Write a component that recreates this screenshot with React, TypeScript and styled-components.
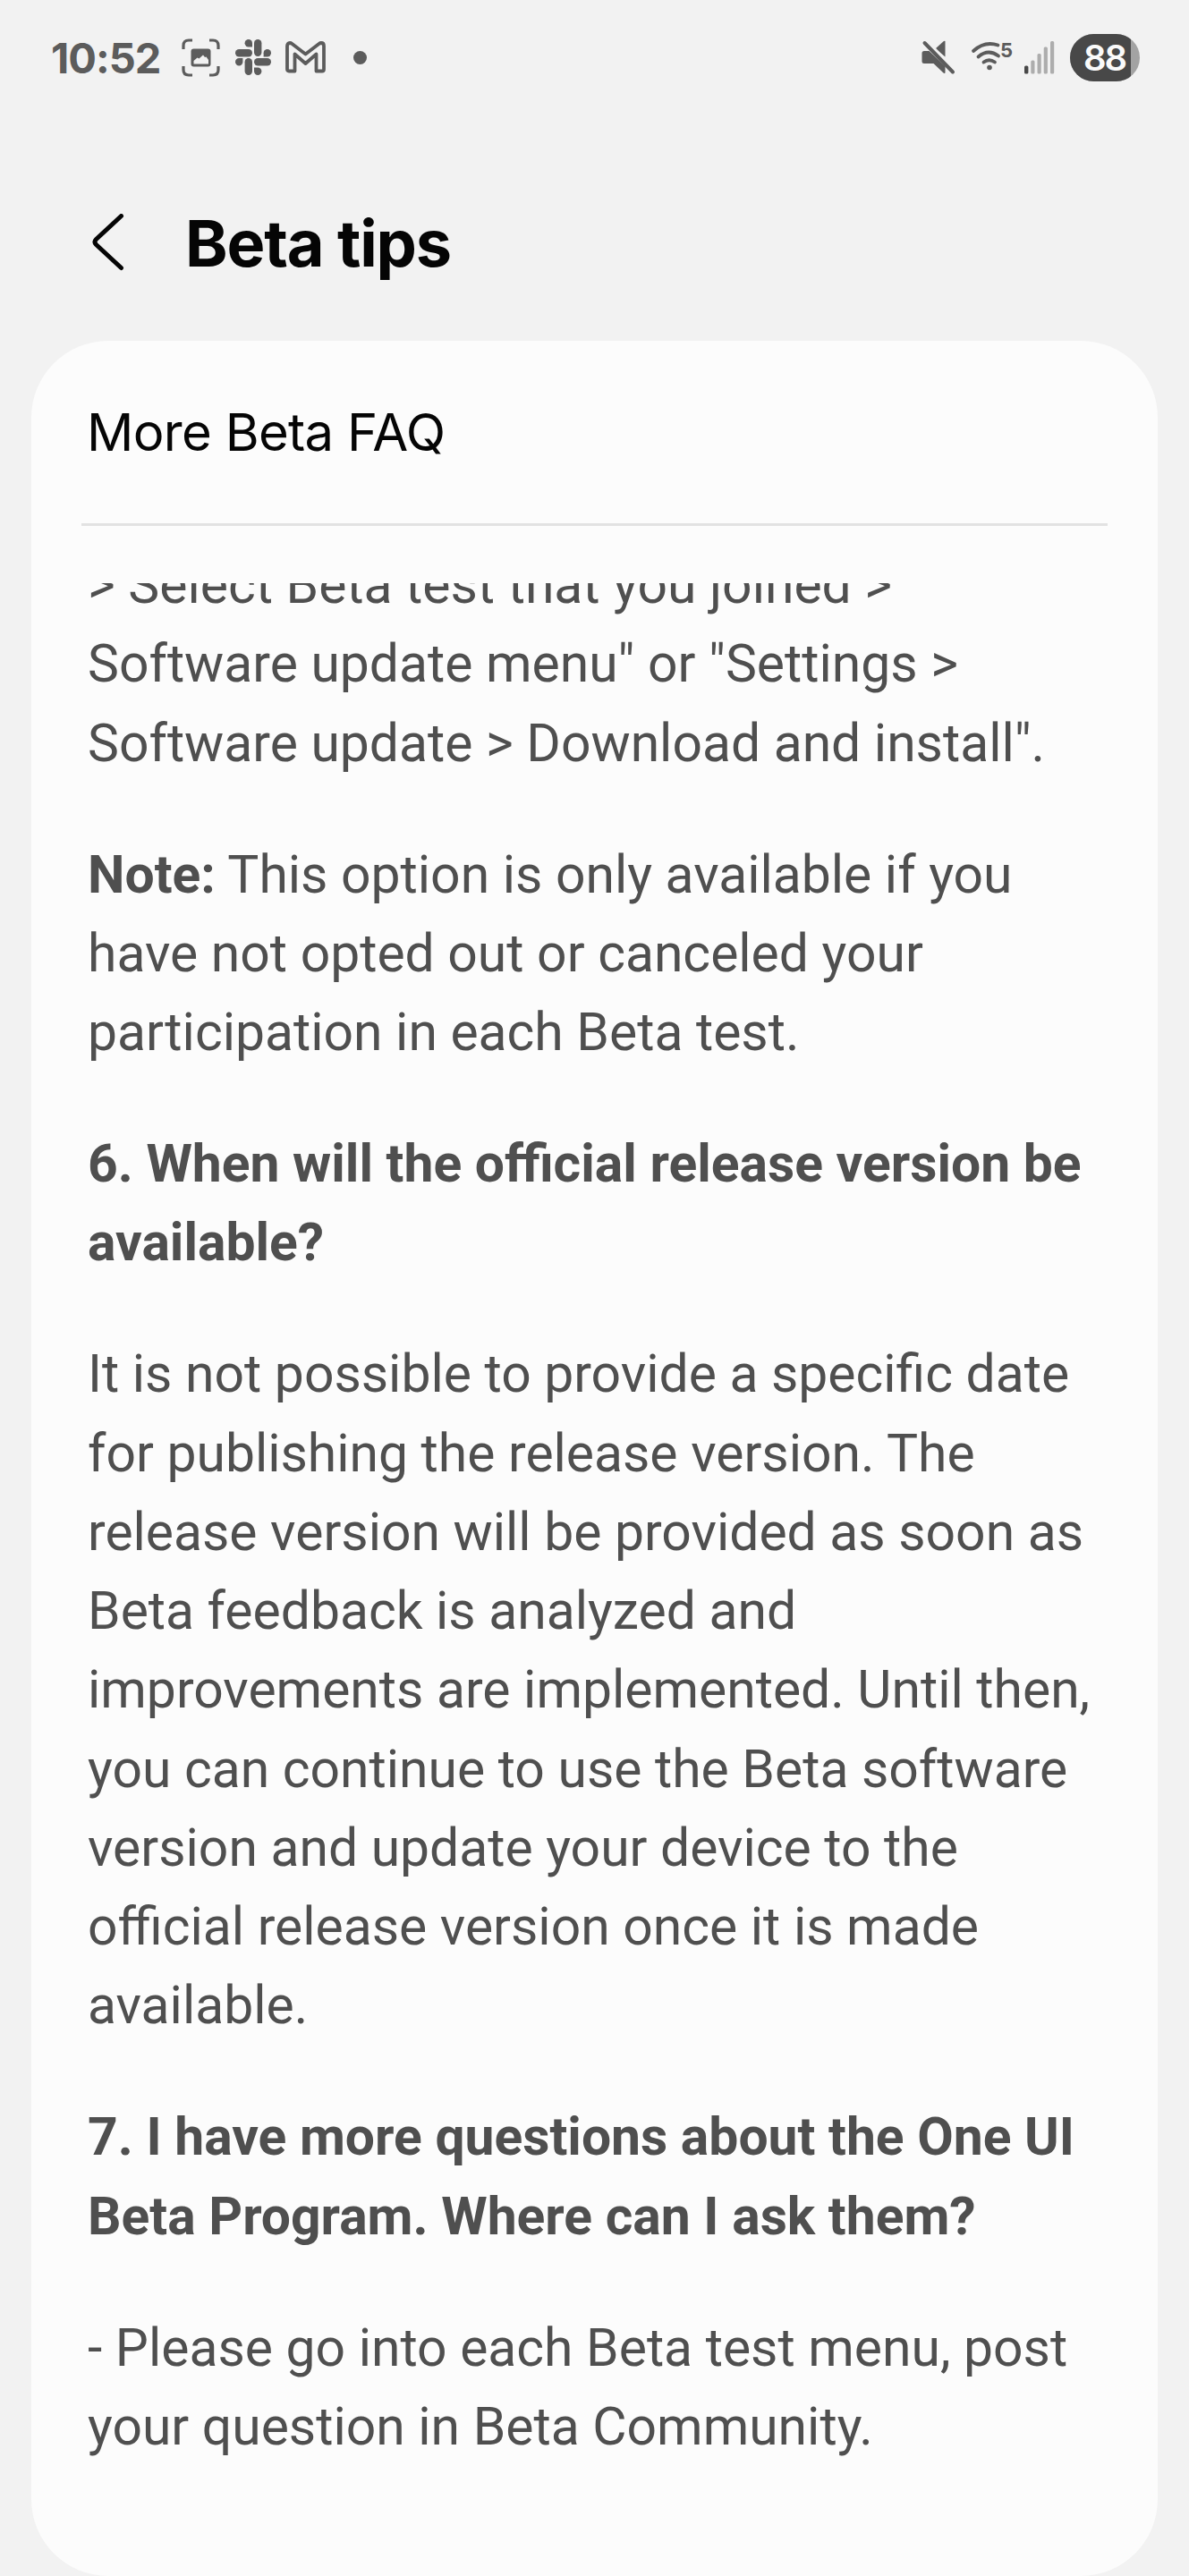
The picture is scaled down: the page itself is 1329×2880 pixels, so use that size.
import styled, { createGlobalStyle } from "styled-components";

const INK = "#5c5c5c";

function App() {
  return (
    <Screen>
      <GlobalStyle />
      <StatusBar>
        <Clock>10:52</Clock>
        <CaptureIcon />
        <SlackIcon />
        <GmailIcon />
        <MoreDot />
        <Spacer />
        <MuteIcon />
        <WifiIcon />
        <SignalIcon />
        <Battery>
          <BatteryLevel>88</BatteryLevel>
        </Battery>
      </StatusBar>
      <Header>
        <BackButton aria-label="Back">
          <svg width="36" height="66" viewBox="0 0 36 66" fill="none">
            <path d="M32.5 2.5L4.500 28.500Q1.500 31.500 4.500 34.500L32.500 60.500" stroke="#050505" strokeWidth="5" strokeLinecap="round" />
          </svg>
        </BackButton>
        <Title>Beta tips</Title>
      </Header>
      <Card>
        <CardTitle>More Beta FAQ</CardTitle>
        <Scroller>
          <Article>
            <p>
              &gt; Select Beta test that you joined &gt;
              <br />
              Software update menu" or "Settings &gt;
              <br />
              Software update &gt; Download and install".
            </p>
            <p>
              <b>Note:</b> This option is only available if you
              <br />
              have not opted out or canceled your
              <br />
              participation in each Beta test.
            </p>
            <Question>
              6. When will the official release version be
              <br />
              available?
            </Question>
            <p>
              It is not possible to provide a specific date
              <br />
              for publishing the release version. The
              <br />
              release version will be provided as soon as
              <br />
              Beta feedback is analyzed and
              <br />
              improvements are implemented. Until then,
              <br />
              you can continue to use the Beta software
              <br />
              version and update your device to the
              <br />
              official release version once it is made
              <br />
              available.
            </p>
            <Question>
              7. I have more questions about the One UI
              <br />
              Beta Program. Where can I ask them?
            </Question>
            <p>
              - Please go into each Beta test menu, post
              <br />
              your question in Beta Community.
            </p>
          </Article>
        </Scroller>
      </Card>
    </Screen>
  );
}

function CaptureIcon() {
  return (
    <Icon width="43" height="43" viewBox="0 0 43 43" $left={21}>
      <path
        d="M2 12V8Q2 2 8 2H12M31 2H35Q41 2 41 8V12M41 31V35Q41 41 35 41H31M12 41H8Q2 41 2 35V31"
        fill="none"
        stroke={INK}
        strokeWidth="3.2"
      />
      <rect x="10.5" y="11.5" width="22" height="20" rx="3" fill={INK} />
      <path d="M13.5 28.5V25L17.5 21.5L19.5 22.5L24 18.5L26 21L27.5 20.5L30 24V28.5Z" fill="#f2f2f2" />
    </Icon>
  );
}

function SlackIcon() {
  return (
    <Icon width="40" height="40" viewBox="0 0 40 40" $left={17}>
      <g fill={INK}>
        <rect x="0" y="11" width="19" height="8.4" rx="4.2" />
        <rect x="21" y="0" width="8.4" height="19" rx="4.2" />
        <rect x="21" y="21" width="19" height="8.4" rx="4.2" />
        <rect x="10.6" y="21" width="8.4" height="19" rx="4.2" />
        <path d="M14.8 0A4.2 4.2 0 0 1 19 4.2V8.4H14.8A4.2 4.2 0 0 1 14.8 0Z" />
        <path d="M40 15.2A4.2 4.2 0 0 1 35.8 19.4H31.6V15.2A4.2 4.2 0 0 1 40 15.2Z" />
        <path d="M25.2 40A4.2 4.2 0 0 1 21 35.8V31.6H25.2A4.2 4.2 0 0 1 25.2 40Z" />
        <path d="M0 25.2A4.2 4.2 0 0 1 4.2 21H8.4V25.2A4.2 4.2 0 0 1 0 25.2Z" />
      </g>
    </Icon>
  );
}

function GmailIcon() {
  return (
    <Icon width="45" height="36" viewBox="0 0 45 36" $left={16}>
      <path
        d="M2 31.500V5.500Q2 2 5 2Q6.200 2 7.500 3L22.500 14.500L37.500 3Q38.800 2 40 2Q43 2 43 5.500V31.500Q43 33.500 41 33.500H34.500V14.500L22.500 25L10.500 14.500V33.500H4Q2 33.500 2 31.500Z"
        fill="none"
        stroke={INK}
        strokeWidth="3.800"
        strokeLinejoin="round"
      />
    </Icon>
  );
}

function MuteIcon() {
  return (
    <Icon width="38" height="38" viewBox="0 0 38 38" $left={0}>
      <path d="M26.5 1V18.5L15.5 9.5L24 1.8Q25.5 .5 26.5 1Z" fill={INK} />
      <path d="M3 12H8.5L26.5 29V36.5Q25.500 37.500 24 36L13.500 26H3Q.5 26 .5 23.500V14.500Q.5 12 3 12Z" fill={INK} />
      <path d="M3.500 3L35 35.500" stroke={INK} strokeWidth="4" strokeLinecap="round" />
      <path d="M6.500 .5L38 33" stroke="#f2f2f2" strokeWidth="2" />
    </Icon>
  );
}

function WifiIcon() {
  return (
    <Icon width="50" height="36" viewBox="0 0 50 36" $left={18}>
      <g fill="none" stroke={INK} strokeWidth="3.8" strokeLinecap="round">
        <path d="M2 11Q14.500 -.5 29.500 4.500" />
        <path d="M7.500 17.500Q18.500 8 30 16.500" />
        <path d="M13.500 23.500Q19.500 19 26 23.500" />
      </g>
      <circle cx="20" cy="29.500" r="2.800" fill={INK} />
      <WifiLabel x="32" y="18">
        5
      </WifiLabel>
    </Icon>
  );
}

function SignalIcon() {
  return (
    <Icon width="34" height="38" viewBox="0 0 34 38" $left={9}>
      <rect x="0" y="28.500" width="4.400" height="9" rx="1.500" fill="#484848" />
      <g fill="#adadad">
        <rect x="7.300" y="22.500" width="4.200" height="15" rx="1.500" />
        <rect x="14.500" y="15" width="4.200" height="22.500" rx="1.500" />
        <rect x="21.700" y="7.500" width="4.200" height="30" rx="1.500" />
        <rect x="29" y="1" width="4.200" height="36.500" rx="1.500" />
      </g>
    </Icon>
  );
}

const GlobalStyle = createGlobalStyle`
  body {
    margin: 0;
    background-color: #f2f2f2;
  }
`;

const Screen = styled.div`
  display: flex;
  flex-direction: column;
  width: 1329px;
  height: 2880px;
  overflow: hidden;
  background-color: #f2f2f2;
  font-family: Inter, sans-serif;
`;

const StatusBar = styled.div`
  display: flex;
  align-items: center;
  height: 128px;
  padding: 0 55px 0 57px;
  box-sizing: border-box;
`;

const Clock = styled.span`
  width: 125px;
  color: ${INK};
  font-size: 47px;
  font-weight: 700;
  letter-spacing: -1px;
  white-space: nowrap;
`;

const Icon = styled.svg<{ $left: number }>`
  flex-shrink: 0;
  margin-left: ${(props) => props.$left}px;
  overflow: visible;
`;

const WifiLabel = styled.text`
  fill: ${INK};
  font-size: 22px;
  font-weight: 700;
`;

const MoreDot = styled.span`
  width: 15px;
  height: 15px;
  margin-left: 31px;
  border-radius: 50%;
  background-color: ${INK};
`;

const Spacer = styled.div`
  flex: 1;
`;

const Battery = styled.div`
  width: 78px;
  height: 53px;
  margin-left: 17px;
  border-radius: 27px;
  overflow: hidden;
  background-color: #a3a3a3;
`;

const BatteryLevel = styled.div`
  width: 68px;
  height: 53px;
  padding-left: 9px;
  box-sizing: border-box;
  background-color: #484848;
  color: #fafafa;
  font-size: 40px;
  font-weight: 600;
  letter-spacing: -2px;
  line-height: 53px;
  text-align: center;
`;

const Header = styled.header`
  display: flex;
  align-items: center;
  height: 253px;
  padding: 34px 0 0 103px;
  box-sizing: border-box;
`;

const BackButton = styled.button`
  display: flex;
  width: 36px;
  padding: 0;
  border: 0;
  background: none;
`;

const Title = styled.h1`
  margin: 0 0 0 68px;
  color: #050505;
  font-size: 72px;
  font-weight: 700;
  letter-spacing: -1.2px;
  white-space: nowrap;
`;

const Card = styled.main`
  display: flex;
  flex-direction: column;
  height: 2499px;
  margin: 0 35px;
  border-radius: 86px;
  background-color: #fcfcfc;
`;

const CardTitle = styled.h2`
  height: 207px;
  margin: 0 56px;
  padding-left: 6px;
  box-sizing: border-box;
  border-bottom: 3px solid #e2e2e2;
  color: #050505;
  font-size: 58px;
  font-weight: 400;
  letter-spacing: -0.7px;
  line-height: 204px;
`;

const Scroller = styled.div`
  height: 2150px;
  margin: 64px 0 0 63px;
  overflow: hidden;
`;

const Article = styled.article`
  margin-top: -42px;
  color: #4f4f4f;
  font-family: Roboto, sans-serif;
  font-size: 58.8px;
  line-height: 88.25px;
  white-space: nowrap;

  p {
    margin: 0 0 58.8px;
  }
`;

const Question = styled.p`
  font-weight: 700;
`;

export default App;
